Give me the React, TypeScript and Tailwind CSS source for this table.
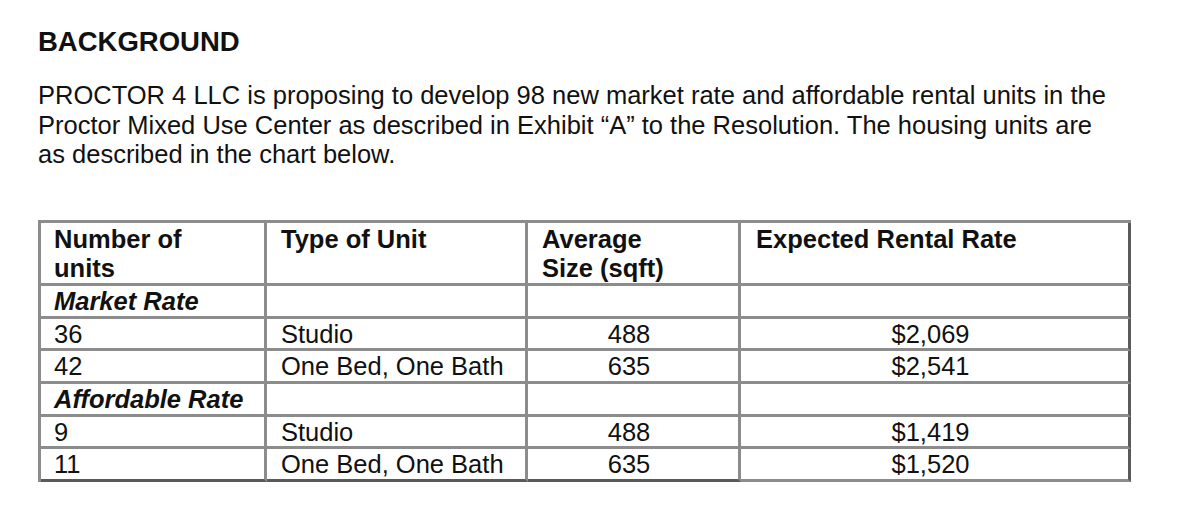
import React from "react";

const font = { fontFamily: '"Liberation Sans", Arial, sans-serif' };

type Row = { kind: "section"; label: string; h: string } | { kind: "data"; n: string; type: string; size: string; rate: string; h: string };

const rows: Row[] = [
  { kind: "section", label: "Market Rate", h: "h-[33px]" },
  { kind: "data", n: "36", type: "Studio", size: "488", rate: "$2,069", h: "h-[32px]" },
  { kind: "data", n: "42", type: "One Bed, One Bath", size: "635", rate: "$2,541", h: "h-[33px]" },
  { kind: "section", label: "Affordable Rate", h: "h-[33px]" },
  { kind: "data", n: "9", type: "Studio", size: "488", rate: "$1,419", h: "h-[32px]" },
  { kind: "data", n: "11", type: "One Bed, One Bath", size: "635", rate: "$1,520", h: "h-[33px]" },
];

const cell = "border-r-[3px] border-b-[3px] border-[#8c8c8c] p-0 align-middle";
const lastCell = "border-r-[3px] border-b-[3px] border-b-[#8c8c8c] border-r-[#5a5a5a] p-0 align-middle";
const body = "leading-[27px] pt-[2px]";

export default function App() {
  return (
    <div className="w-[1200px] h-[516px] bg-white text-[#111]" style={font}>
      <div className="pl-[38px] pt-[27px]">
        <h1 className="text-[27.5px] leading-[30px] font-bold">BACKGROUND</h1>
        <p className="mt-[24px] text-[25.5px] leading-[29.5px] w-[1074px]">
          PROCTOR 4 LLC is proposing to develop 98 new market rate and affordable rental units in the
          Proctor Mixed Use Center as described in Exhibit “A” to the Resolution. The housing units are
          as described in the chart below.
        </p>
        <table className="mt-[50px] table-fixed border-separate border-spacing-0 border-l-[3px] border-t-[3px] border-[#8c8c8c] w-[1093px] text-[25.5px] leading-[29px]">
          <thead>
            <tr className="h-[63px]">
              <th className={`${cell} w-[226px] align-top text-left font-bold pl-[13px] pt-[2px]`}>Number of<br />units</th>
              <th className={`${cell} w-[261px] align-top text-left font-bold pl-[14px] pt-[2px]`}>Type of Unit</th>
              <th className={`${cell} w-[213px] align-top text-left font-bold pl-[14px] pt-[2px]`}>Average<br />Size (sqft)</th>
              <th className={`${lastCell} w-[390px] align-top text-left font-bold pl-[15px] pt-[2px]`}>Expected Rental Rate</th>
            </tr>
          </thead>
          <tbody>
            {rows.map((r, i) => {
              const last = i === rows.length - 1;
              const b = last ? "border-b-[#5a5a5a]" : "";
              if (r.kind === "section") {
                return (
                  <tr key={i} className={r.h}>
                    <td className={`${cell} ${b} ${body} pl-[13px] font-bold italic`}>{r.label}</td>
                    <td className={`${cell} ${b}`}></td>
                    <td className={`${cell} ${b}`}></td>
                    <td className={`${lastCell} ${b}`}></td>
                  </tr>
                );
              }
              return (
                <tr key={i} className={r.h}>
                  <td className={`${cell} ${b} ${body} pl-[13px]`}>{r.n}</td>
                  <td className={`${cell} ${b} ${body} pl-[14px]`}>{r.type}</td>
                  <td className={`${cell} ${b} ${body} text-center pr-[8px]`}>{r.size}</td>
                  <td className={`${lastCell} ${b} ${body} text-center pr-[8px]`}>{r.rate}</td>
                </tr>
              );
            })}
          </tbody>
        </table>
      </div>
    </div>
  );
}
